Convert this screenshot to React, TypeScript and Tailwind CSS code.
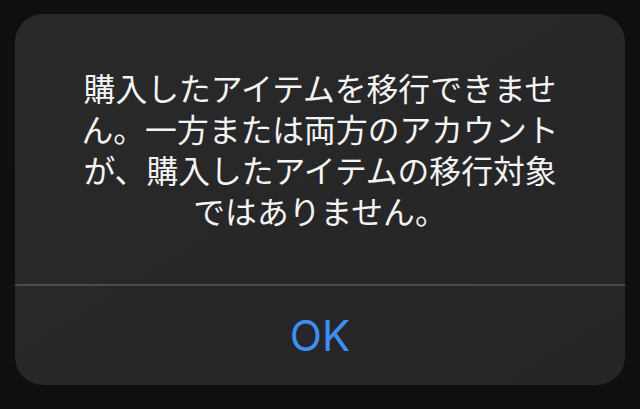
export default function App() {
  return (
    <div className="flex h-[409px] w-[640px] bg-[#0f0f11] pl-[15px] pt-[14px]">
      <div className="flex h-[371px] w-[610px] flex-col overflow-hidden rounded-[28px] bg-gradient-to-br from-[#29292a] to-[#252527]">
        <div className="flex h-[270px] items-center justify-center px-[60px]">
          <p
            className="text-center text-[31.8px] leading-[41px] text-[#f4f4f4]"
            style={{ fontFamily: '"Noto Sans CJK JP", "Noto Sans", sans-serif' }}
          >
            購入したアイテムを移行できません。一方または両方のアカウントが、購入したアイテムの移行対象ではありません。
          </p>
        </div>
        <div className="h-[2px] bg-[#4a4a4c]" />
        <button
          className="flex flex-1 items-center justify-center text-[42px] text-[#3e8ff5]"
          style={{ fontFamily: 'Inter, "Liberation Sans", sans-serif' }}
        >
          OK
        </button>
      </div>
    </div>
  );
}
